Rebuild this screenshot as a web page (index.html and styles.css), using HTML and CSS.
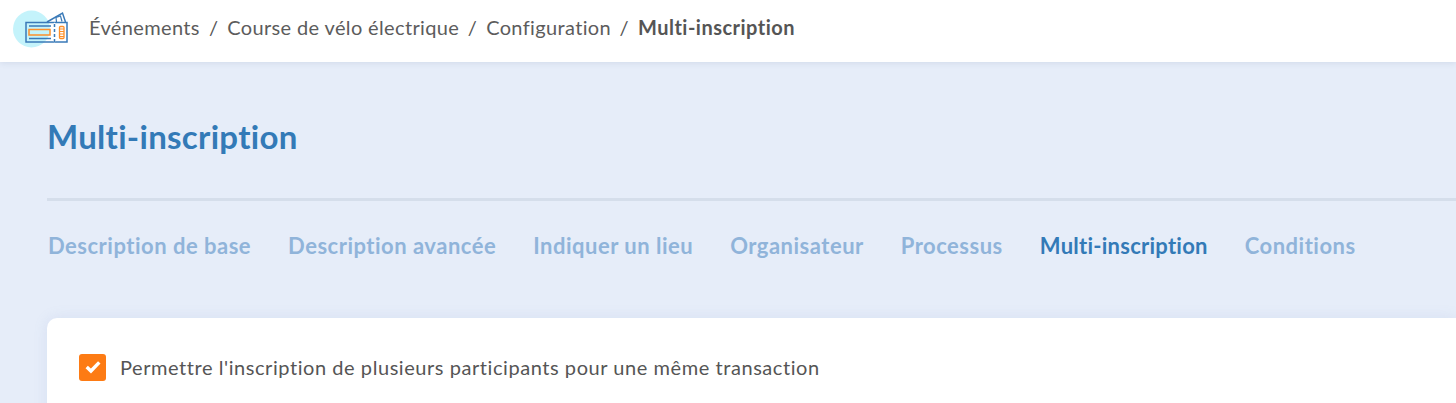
FILE: index.html
```html
<!DOCTYPE html>
<html lang="fr">
<head>
  <meta charset="UTF-8">
  <title>Multi-inscription</title>
  <link rel="stylesheet" href="styles.css">
</head>
<body>
  <header class="topbar">
    <svg class="logo" width="56" height="42" viewBox="13 7 56 42">
      <circle cx="31.500" cy="29" r="18.500" fill="#c4f3fb"/>
      <g fill="none" stroke="#3a7ab8">
        <path d="M47 22 L62.500 13 L65.500 22" stroke-width="1.500"/>
        <path d="M56.500 22 L56 17.500 L60.500 16 L62 21.500" stroke-width="1.200"/>
        <path d="M54.500 22.500 H26 V42 H54.500" stroke-width="1.500"/>
        <path d="M54.500 22.500 H67 V42 H54.500" stroke-width="1.500"/>
        <path d="M54.500 23 V42" stroke-width="1.500" stroke="#fff"/>
        <path d="M54.500 24 V42" stroke-width="1.500" stroke-dasharray="3 2"/>
        <path d="M29 26 H51 M29 38.500 H51" stroke-width="1.500"/>
      </g>
      <g fill="none" stroke="#fd8f2a">
        <rect x="29" y="29.500" width="21" height="5.500" stroke-width="1.500"/>
        <rect x="59.500" y="26.500" width="4.500" height="12" rx="1" stroke-width="1.300"/>
        <path d="M59.500 29 H64 M59.500 31.500 H64 M59.500 34 H64 M59.500 36.500 H64" stroke-width="1"/>
      </g>
    </svg>
    <nav class="crumbs">
      <a href="#">Événements</a><span class="sep">/</span>
      <a href="#">Course de vélo électrique</a><span class="sep">/</span>
      <a href="#">Configuration</a><span class="sep">/</span>
      <strong>Multi-inscription</strong>
    </nav>
  </header>
  <main class="page">
    <h1>Multi-inscription</h1>
    <hr class="rule">
    <nav class="tabs">
      <a href="#">Description de base</a>
      <a href="#">Description avancée</a>
      <a href="#">Indiquer un lieu</a>
      <a href="#">Organisateur</a>
      <a href="#">Processus</a>
      <a href="#" class="active">Multi-inscription</a>
      <a href="#">Conditions</a>
    </nav>
    <section class="panel">
      <label class="check">
        <span class="box">
          <svg width="16" height="14" viewBox="0 0 14 12"><path d="M1.500 6 L5.200 9.500 L12.500 2" fill="none" stroke="#fff" stroke-width="3"/></svg>
        </span>
        Permettre l'inscription de plusieurs participants pour une même transaction
      </label>
    </section>
  </main>
</body>
</html>
```
FILE: styles.css
```css
* {
  box-sizing: border-box;
}
html, body {
  height: 100%;
}
body {
  margin: 0;
  overflow: hidden;
  background-color: #e6edf9;
  font-family: 'Lato', 'Open Sans', sans-serif;
  font-variant-ligatures: none;
  color: #555;
}
.topbar {
  display: flex;
  align-items: center;
  height: 62px;
  padding: 0 0 6px 13px;
  background: #fff;
  box-shadow: 0 1px 6px rgba(60, 80, 120, 0.12);
}
.logo {
  flex-shrink: 0;
}
.crumbs {
  display: flex;
  align-items: center;
  margin: 0 0 2px 20px;
  font-size: 20px;
  letter-spacing: 0.36px;
  line-height: 26px;
}
.crumbs a {
  color: #5c5c5c;
  text-decoration: none;
}
.crumbs .sep {
  margin: 0 9px;
}
.crumbs .sep:nth-of-type(n+2) {
  margin: 0 9px 0 8.500px;
}
.crumbs strong {
  font-weight: 700;
  letter-spacing: 0.48px;
}
.page {
  padding: 0 0 0 47px;
}
h1 {
  margin: 0;
  padding-top: 54px;
  color: #337ab7;
  font-size: 33px;
  font-weight: 700;
  letter-spacing: 0.3px;
  line-height: 40px;
}
.rule {
  height: 3px;
  margin: 42px 0 0;
  border: 0;
  background: #d5deeb;
}
.tabs {
  display: flex;
  gap: 37px;
  padding: 31px 0 0 1px;
  font-size: 22px;
  font-weight: 700;
  letter-spacing: 0.5px;
  line-height: 28px;
}
.tabs a {
  color: #90b4da;
  text-decoration: none;
}
.tabs a.active {
  color: #337ab7;
  letter-spacing: 0.25px;
}
.panel {
  margin-top: 58px;
  padding: 35px 32px;
  height: 120px;
  background: #fff;
  border-radius: 10px 0 0 0;
  box-shadow: 0 0 14px rgba(120, 150, 200, 0.15);
}
.check {
  display: flex;
  align-items: center;
  gap: 14px;
  font-size: 20px;
  letter-spacing: 0.56px;
  line-height: 28px;
}
.box {
  display: flex;
  align-items: center;
  justify-content: center;
  width: 27px;
  height: 27px;
  background: #fd7b14;
  border-radius: 3px;
}
```
